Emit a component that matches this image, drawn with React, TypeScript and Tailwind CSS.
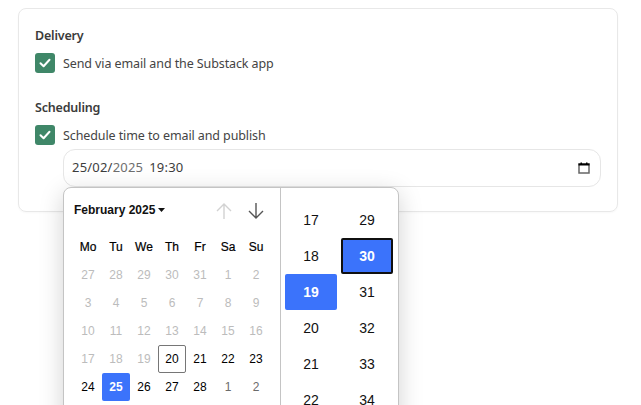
import React from 'react';

const weeks = [
  ['27', '28', '29', '30', '31', '1', '2'],
  ['3', '4', '5', '6', '7', '8', '9'],
  ['10', '11', '12', '13', '14', '15', '16'],
  ['17', '18', '19', '20', '21', '22', '23'],
  ['24', '25', '26', '27', '28', '1', '2'],
];
const weekdays = ['Mo', 'Tu', 'We', 'Th', 'Fr', 'Sa', 'Su'];
const hours = ['17', '18', '19', '20', '21', '22'];
const minutes = ['29', '30', '31', '32', '33', '34'];

const CheckBox = () => (
  <span className="flex h-5 w-5 items-center justify-center rounded-[3px] bg-[#3f8768]">
    <svg width="12" height="12" viewBox="0 0 12 12" fill="none">
      <path d="M1.5 6.2 L4.6 9.2 L10.5 2.8" stroke="white" strokeWidth="2" strokeLinecap="round" strokeLinejoin="round" />
    </svg>
  </span>
);

const dayClass = (w: number, d: number) => {
  if (w === 4 && d === 1) return 'bg-[#3b73fb] text-white font-bold rounded-[2px]';
  if (w === 3 && d === 3) return 'border border-[#767676] rounded-[2px] text-black';
  if (w === 4 && d >= 5) return 'text-[#6b6b6b]';
  if (w < 3 || (w === 3 && d < 3)) return 'text-[#bcbcbc]';
  return 'text-black';
};

const TimeCell = ({ value, state }: { value: string; state?: 'selected' | 'focus' }) => (
  <div
    className={
      state === 'selected'
        ? 'flex h-9 items-center justify-center rounded-[2px] bg-[#3b73fb] font-bold text-white'
        : state === 'focus'
          ? 'flex h-9 items-center justify-center rounded-[2px] border-2 border-[#101010] bg-[#3b73fb] font-bold text-white'
          : 'flex h-9 items-center justify-center text-[#111]'
    }
  >
    {value}
  </div>
);

export default function App() {
  return (
    <div className="relative h-[405px] w-[641px] overflow-hidden bg-white font-['Noto_Sans','Open_Sans',sans-serif]">
      <div className="ml-[18px] mt-2 h-[204px] w-[600px] rounded-lg border border-[#e8e8e8] pl-4 pr-4 pt-4 shadow-[0_1px_2px_rgba(0,0,0,0.03)]">
        <div className="h-5 pt-px text-[12.5px] leading-5 font-semibold tracking-[-0.2px] text-[#3b3b3b]">Delivery</div>
        <label className="mt-[8px] flex h-5 items-center gap-2 text-[12.5px] tracking-[-0.1px] text-[#444]">
          <CheckBox />
          <span className="pt-[2px]">Send via email and the Substack app</span>
        </label>
        <div className="mt-[24px] h-5 pt-px text-[12.5px] leading-5 font-semibold tracking-[-0.2px] text-[#3b3b3b]">Scheduling</div>
        <label className="mt-[8px] flex h-5 items-center gap-2 text-[12.5px] tracking-[-0.1px] text-[#444]">
          <CheckBox />
          <span className="pt-[2px]">Schedule time to email and publish</span>
        </label>
        <div className="ml-7 mt-[4px] flex h-[38px] w-[538px] items-center justify-between rounded-xl border border-[#e6e6e6] pl-2 pr-[10px] text-[13px] text-[#3d3d3d]">
          <span className="tracking-[0.2px]">
            25/02/<span className="text-[#6e6e6e]">2025</span>
            <span className="ml-[6px]">19:30</span>
          </span>
          <svg width="12" height="12" viewBox="0 0 12 12" fill="none">
            <rect x="1" y="2" width="10" height="9" stroke="#666" strokeWidth="1.5" fill="white" />
            <rect x="0.5" y="1.5" width="11" height="2" fill="#000" />
            <rect x="2.5" y="0.5" width="1.5" height="1.5" fill="#000" />
            <rect x="8" y="0.5" width="1.5" height="1.5" fill="#000" />
          </svg>
        </div>
      </div>

      {/* picker popup */}
      <div className="absolute left-[63px] top-[187px] flex h-[240px] w-[336px] rounded-lg border border-[#c4c4c4] bg-white font-['Liberation_Sans',Arial,sans-serif] shadow-[0_6px_24px_rgba(0,0,0,0.18)]">
        <div className="w-[217px] border-r border-[#c4c4c4] pl-[10px] pt-[11px]">
          <div className="flex h-6 items-center pr-[15px]">
            <span className="pb-[3px] text-[12px] font-bold text-[#111]">February 2025</span>
            <svg className="mb-[2px] ml-[3px]" width="7" height="4" viewBox="0 0 7 4">
              <path d="M0 0 H7 L3.5 4 Z" fill="#111" />
            </svg>
            <svg className="ml-auto" width="18" height="18" viewBox="0 0 18 18" fill="none" stroke="#d2d2d2" strokeWidth="1.4">
              <path d="M9 17 V2 M2 9 L9 2 L16 9" />
            </svg>
            <svg className="ml-[14px]" width="18" height="18" viewBox="0 0 18 18" fill="none" stroke="#555" strokeWidth="1.4">
              <path d="M9 1 V16 M2 9 L9 16 L16 9" />
            </svg>
          </div>
          <div className="mt-[10px] grid w-[196px] grid-cols-7 text-[12px]">
            {weekdays.map((d) => (
              <div key={d} className="flex h-7 items-center justify-center font-normal text-black [-webkit-text-stroke:0.2px_black]">
                {d}
              </div>
            ))}
            {weeks.map((week, w) =>
              week.map((day, d) => (
                <div key={`${w}-${d}`} className={`flex h-7 items-center justify-center ${dayClass(w, d)}`}>
                  {day}
                </div>
              )),
            )}
          </div>
        </div>
        <div className="grid h-[230px] grid-cols-[52px_52px] gap-x-1 pl-1 pt-[14px] text-[14px]">
          <div>
            {hours.map((h) => (
              <TimeCell key={h} value={h} state={h === '19' ? 'selected' : undefined} />
            ))}
          </div>
          <div>
            {minutes.map((m) => (
              <TimeCell key={m} value={m} state={m === '30' ? 'focus' : undefined} />
            ))}
          </div>
        </div>
      </div>
    </div>
  );
}
